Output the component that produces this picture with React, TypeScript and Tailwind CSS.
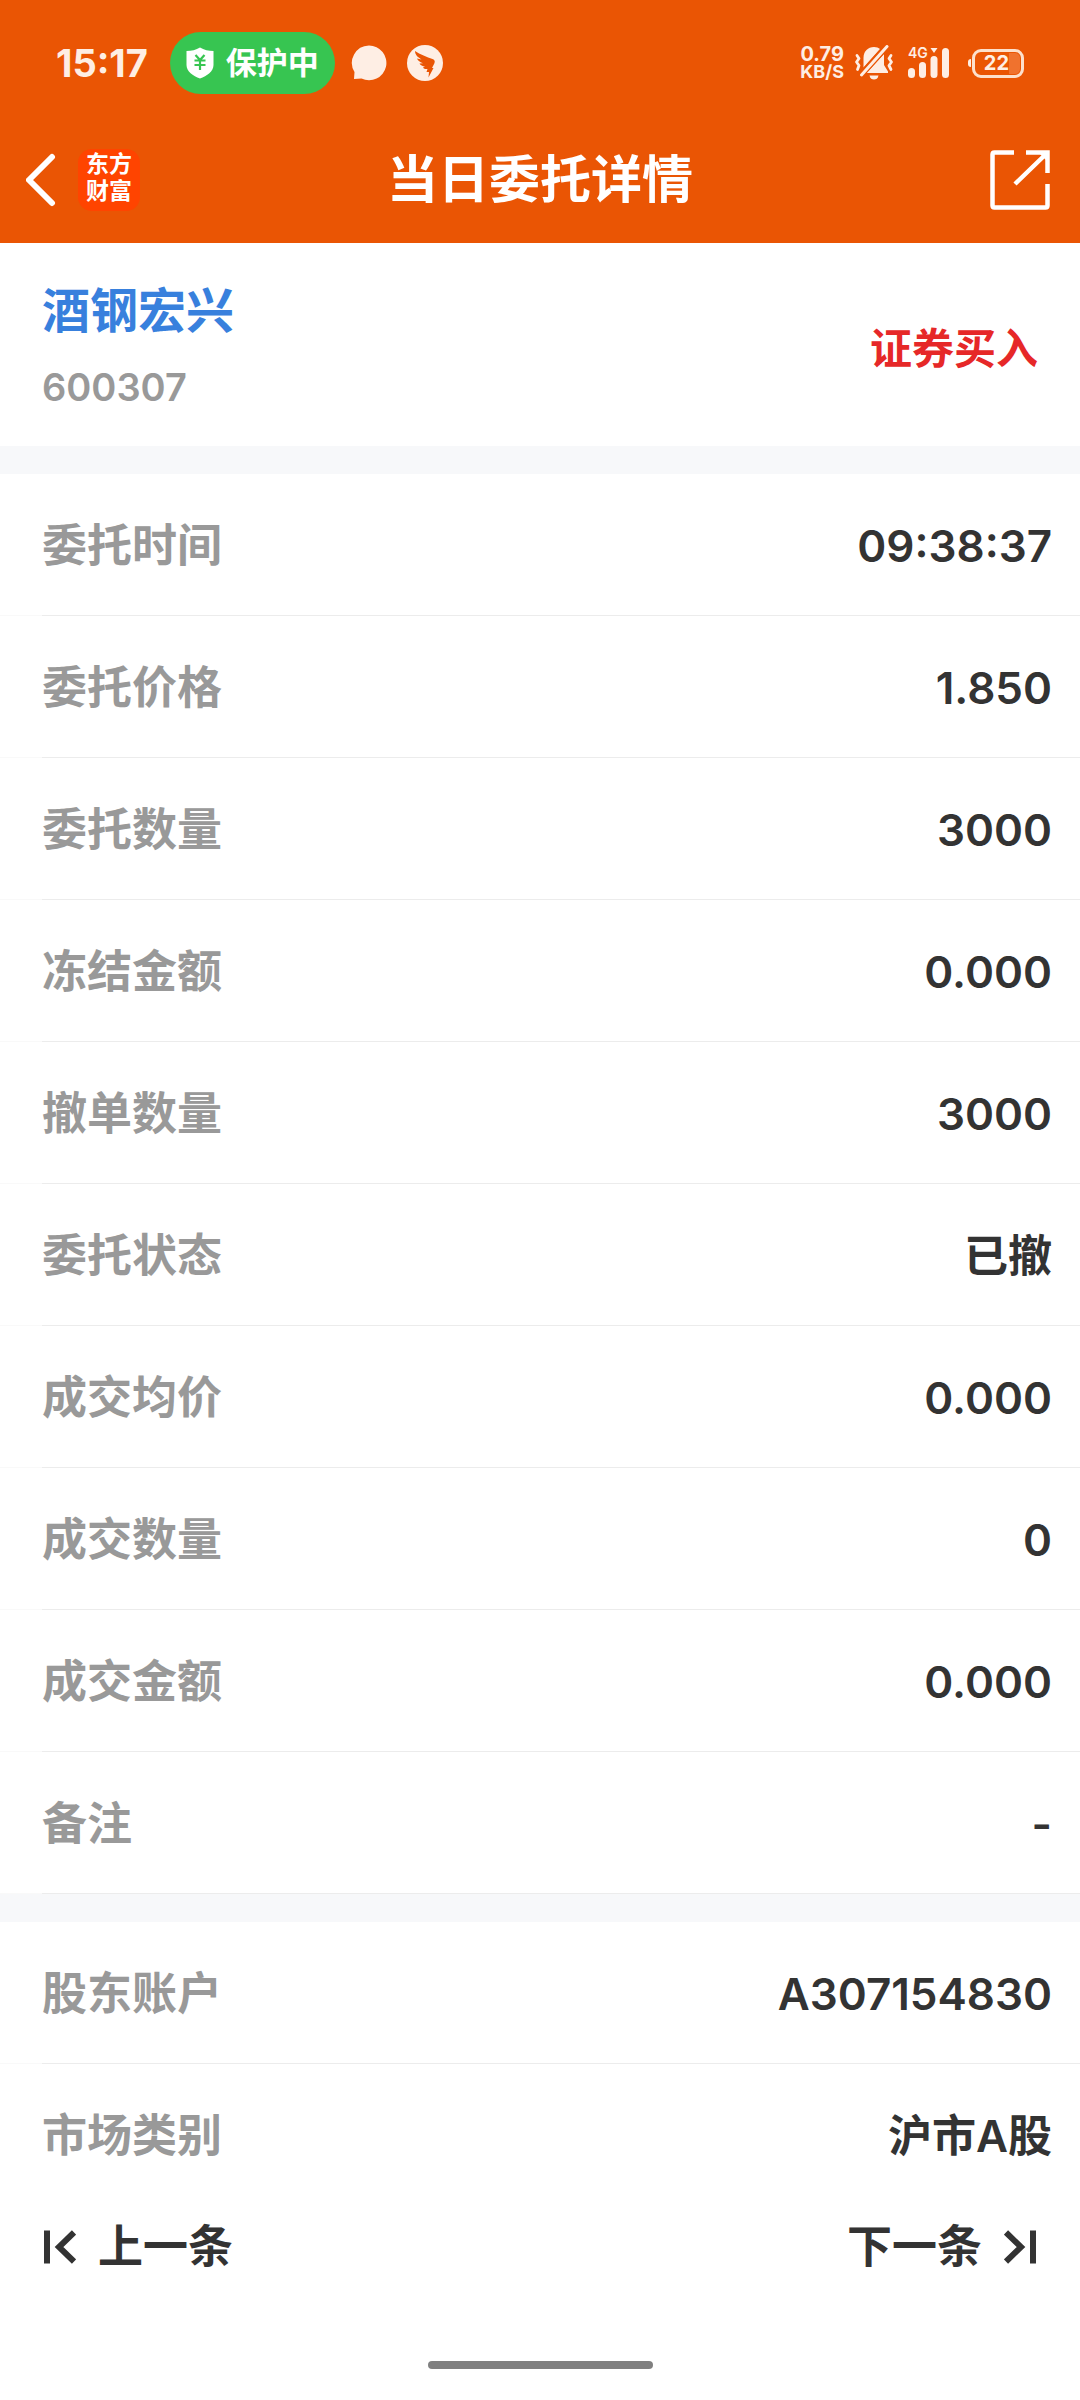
import React from 'react';

interface DetailItem {
    label: string;
    value: string;
}

const orderItems: DetailItem[] = [
    { label: '委托时间', value: '09:38:37' },
    { label: '委托价格', value: '1.850' },
    { label: '委托数量', value: '3000' },
    { label: '冻结金额', value: '0.000' },
    { label: '撤单数量', value: '3000' },
    { label: '委托状态', value: '已撤' },
    { label: '成交均价', value: '0.000' },
    { label: '成交数量', value: '0' },
    { label: '成交金额', value: '0.000' },
    { label: '备注', value: '-' },
];

const accountItems: DetailItem[] = [
    { label: '股东账户', value: 'A307154830' },
    { label: '市场类别', value: '沪市A股' },
];

const ShieldIcon = () => (
    <svg className="w-7 h-8" viewBox="0 0 28 32" fill="none">
        <path d="M14 0.5C18 3 22.500 4 27.500 4V18C27.500 24.500 21 29 14 31.500C7 29 0.500 24.500 0.500 18V4C5.500 4 10 3 14 0.500Z" fill="white" />
        <path d="M9.500 8L14 13L18.500 8M8.500 13.500H19.500M8.500 18H19.500M14 13V23" stroke="#37c551" strokeWidth={2.2} />
    </svg>
);

const ChatIcon = () => (
    <svg className="w-9 h-9" viewBox="0 0 36 36" fill="#feeee4">
        <path d="M18 0.500A17.400 17.400 0 1 1 10.500 33.600L3 34L3.500 27A17.400 17.400 0 0 1 18 0.500Z" />
    </svg>
);

const WingIcon = () => (
    <svg className="w-9 h-9" viewBox="0 0 36 36">
        <circle cx="18" cy="18" r="18" fill="#feeee4" />
        <path d="M8 6C13 9.500 20 12 25.500 14C28 15 28.200 16.500 27.300 18.500L25 23H26.500L21.500 32.500L22 27H19.500L20.500 24C18.500 24.300 17 23.800 16 22.500L18 21.500C15.500 21.300 13.500 20.200 12.500 18.500L16 18.300C12.500 17 10.500 15.300 10 13.500L14.500 14.500C10.500 12 8 9.500 8 6Z" fill="#ea5504" />
    </svg>
);

const MutedBellIcon = () => (
    <svg className="w-10 h-9" viewBox="0 0 40 36" fill="none">
        <path d="M9.500 22.500V13C9.500 6 14 2 20 2C22.500 2 24.500 2.800 26 4Z" fill="#feeee4" />
        <path d="M30 9V20L34 26.500V28H12.500L30 9Z" fill="#feeee4" />
        <path d="M15.500 30.500H24.500C24 33.500 22 34.500 20 34.500C18 34.500 16 33.500 15.500 30.500Z" fill="#feeee4" />
        <path d="M33 1L7 30" stroke="#ea5504" strokeWidth={6} />
        <path d="M33 1.500L7.500 30" stroke="#feeee4" strokeWidth={3} strokeLinecap="round" />
        <path d="M3 10.500L5 13.500L2.500 17L5 20.500L3.500 24.500M37 10.500L35 13.500L37.500 17L35 20.500L37 24.500" stroke="#feeee4" strokeWidth={2.8} strokeLinejoin="round" strokeLinecap="round" />
    </svg>
);

const SignalIcon = () => (
    <svg className="w-[42px] h-11" viewBox="0 -6 42 44" fill="#feeee4">
        <text x="0" y="11" fontSize="14" fontWeight="600">4G</text>
        <rect x="0" y="21" width="7" height="10" rx="3.500" />
        <rect x="11" y="15" width="7" height="16" rx="3.500" />
        <rect x="22.500" y="9" width="7" height="22" rx="3.500" />
        <rect x="34" y="1" width="7" height="30" rx="3.500" />
        <path d="M22.500 1H29.500L26 6Z" />
    </svg>
);

const ExportIcon = () => (
    <svg className="w-[60px] h-[60px]" viewBox="0 0 60 60" fill="none" stroke="white" strokeWidth={4.5}>
        <path d="M24 2.500H4.500Q2.500 2.500 2.500 4.500V55.500Q2.500 57.500 4.500 57.500H55.500Q57.500 57.500 57.500 55.500V34" />
        <path d="M36 2.500H57.500V23M55 5L25 34" />
        <path d="M49 3H57V11Z" fill="white" stroke="none" />
    </svg>
);

const StatusBar = () => (
    <div className="flex h-[116px] items-center justify-between px-14 pt-[10px] text-[#feeee4]">
        <div className="flex items-center">
            <span className="text-[38px] leading-10 font-bold">15:17</span>
            <div className="ml-[22px] flex h-[62px] items-center gap-3 rounded-full bg-[#37c551] px-4 text-white">
                <ShieldIcon />
                <span className="text-[31px] leading-10 font-bold">保护中</span>
            </div>
            <div className="ml-4 flex items-center gap-5">
                <ChatIcon />
                <WingIcon />
            </div>
        </div>
        <div className="flex items-center">
            <div className="text-center font-bold">
                <div className="text-[20px] leading-[18px]">0.79</div>
                <div className="text-[18px] leading-[18px]">KB/S</div>
            </div>
            <div className="ml-[10px] flex items-center gap-[14px]">
                <MutedBellIcon />
                <SignalIcon />
            </div>
            <div className="ml-[18px] flex items-center gap-px">
                <span className="h-2 w-[3px] rounded-l-full bg-[#feeee4]" />
                <span className="flex h-[29px] w-[52px] items-center justify-end rounded-[9px] border-3 border-[#fde0cc] pr-px text-[20px] leading-5 font-bold">
                    22
                    <span className="h-[21px] w-[11px] rounded-r-[5px] bg-[#f0722e]" />
                </span>
            </div>
        </div>
    </div>
);

const TitleBar = () => (
    <div className="grid h-[127px] grid-cols-[1fr_auto_1fr] items-center px-[26px]">
        <div className="flex items-center gap-5">
            <button type="button" aria-label="返回">
                <svg className="h-[54px] w-8" viewBox="2 0 32 54" fill="none">
                    <path d="M28 4L5 27L28 50" stroke="white" strokeWidth={6} strokeLinecap="round" strokeLinejoin="round" />
                </svg>
            </button>
            <div className="flex h-[62px] w-[62px] flex-col items-center justify-center rounded-[14px] bg-[#ff4400] pb-1 text-[23px] leading-[27px] font-bold text-white">
                <span>东方</span>
                <span>财富</span>
            </div>
        </div>
        <h1 className="text-[51px] leading-[60px] font-semibold text-white">当日委托详情</h1>
        <button type="button" aria-label="分享" className="mr-1 justify-self-end">
            <ExportIcon />
        </button>
    </div>
);

const DetailList: React.FC<{ items: DetailItem[]; openEnd?: boolean }> = ({ items, openEnd = false }) => (
    <dl className="leading-[60px] font-semibold">
        {items.map((item, index) => {
            const hideLine = openEnd && index === items.length - 1;
            return (
                <div key={item.label} className="flex h-[142px]">
                    <div className={`w-[42px] border-b ${hideLine ? 'border-transparent' : 'border-[#f9f9f9]'}`} />
                    <div className={`flex flex-1 items-center justify-between border-b pt-0.5 pr-7 ${hideLine ? 'border-transparent' : 'border-[#ececec]'}`}>
                        <dt className="text-[45px] text-[#999999]">{item.label}</dt>
                        <dd className="text-[44px] text-[#333333]">{item.value}</dd>
                    </div>
                </div>
            );
        })}
    </dl>
);

const Divider = () => <div className="h-7 bg-[#f7f8fa]" />;

const App: React.FC = () => {
    return (
        <div className="flex min-h-screen flex-col bg-white font-['Inter','Noto_Sans_CJK_SC',sans-serif]" lang="zh-CN">
            <header className="bg-[#ea5504]">
                <StatusBar />
                <TitleBar />
            </header>

            <main>
                <section className="flex items-center justify-between px-[42px] pt-[37px] pb-[29px] font-semibold">
                    <div className="flex flex-col gap-4">
                        <a href="#quote" className="text-[48px] leading-[61px] text-[#3880dd]">酒钢宏兴</a>
                        <span className="text-[38px] leading-[60px] text-[#999999]">600307</span>
                    </div>
                    <span className="text-[42px] leading-[60px] text-[#e62828]">证券买入</span>
                </section>
                <Divider />
                <DetailList items={orderItems} />
                <Divider />
                <DetailList items={accountItems} openEnd />
            </main>

            <nav className="flex h-20 items-center justify-between px-[42px] pt-0.5 text-[45px] leading-[60px] font-semibold text-[#333333]">
                <button type="button" className="flex items-center gap-[22px]">
                    <svg className="h-[34px] w-[34px]" viewBox="0 0 34 34" fill="none" stroke="currentColor" strokeWidth={6}>
                        <path d="M5 0.500V33.500M32 2.500L17 17L32 31.500" />
                    </svg>
                    上一条
                </button>
                <button type="button" className="flex items-center gap-[22px]">
                    下一条
                    <svg className="h-[34px] w-[34px]" viewBox="0 0 34 34" fill="none" stroke="currentColor" strokeWidth={6}>
                        <path d="M29 0.500V33.500M2 2.500L17 17L2 31.500" />
                    </svg>
                </button>
            </nav>

            <div className="mt-auto mb-[31px] h-2 w-[225px] self-center rounded-full bg-[#808080]" />
        </div>
    );
};

export default App;
